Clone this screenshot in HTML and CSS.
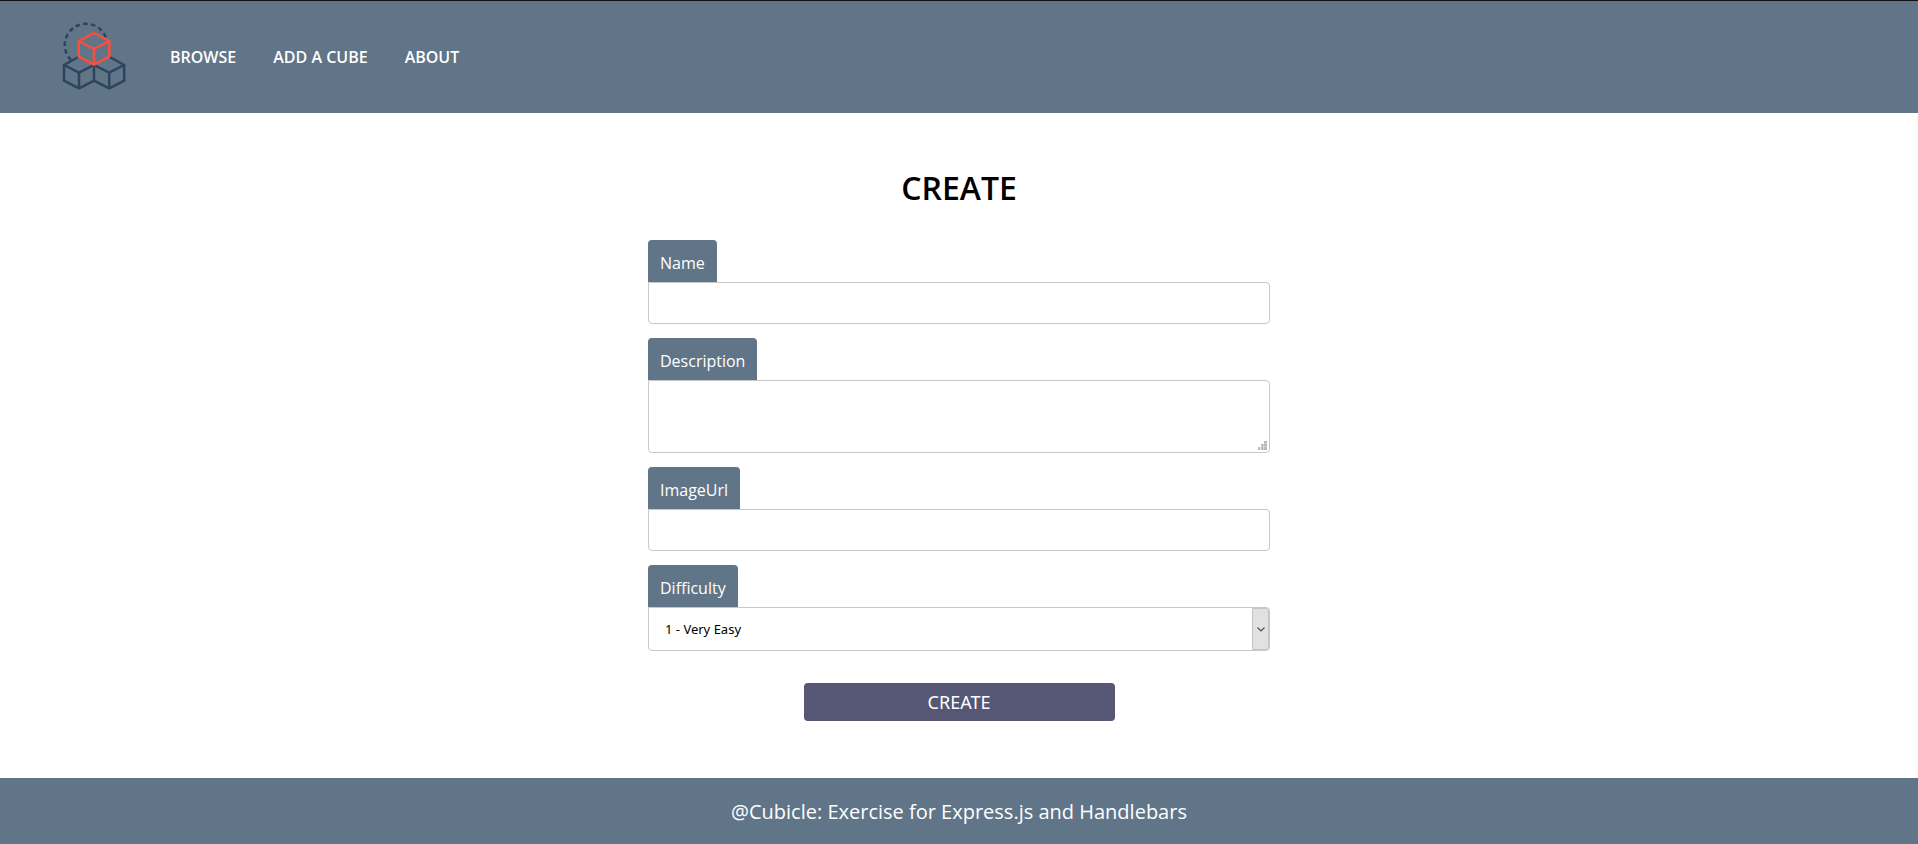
FILE: index.html
```html
<!DOCTYPE html>
<html lang="en">
<head>
<meta charset="utf-8">
<meta name="viewport" content="width=device-width, initial-scale=1">
<title>Cubicle - Create</title>
<link rel="stylesheet" href="styles.css">
</head>
<body>
<header class="site-header">
  <a class="logo" href="#" aria-label="Cubicle home">
    <svg viewBox="60 21 68 72" width="68" height="72" fill="none" stroke-width="2.5" stroke-linejoin="round" stroke-linecap="round">
      <g stroke="#2d445c">
        <path d="M71 60A21.2 21.2 0 1 1 106 38" stroke-dasharray="4.6 3.2" stroke-linecap="butt"/>
        <path d="M77.500 57.500L64 65L79 72.700L94 65V80.700L79 88.300L64 80.700V65M79 72.700V88.300"/>
        <path d="M110.500 57.500L124.200 65L109.200 72.700L94 65M94 80.700L109.200 88.300L124.200 80.700V65M109.200 72.700V88.300"/>
      </g>
      <path stroke="#f9503c" d="M94 33L109.300 41V56.700L94 64.700L78.700 56.700V41ZM78.700 41L94 49L109.300 41M94 49V64.700"/>
    </svg>
  </a>
  <nav class="main-nav">
    <a href="#">BROWSE</a>
    <a href="#">ADD A CUBE</a>
    <a href="#">ABOUT</a>
  </nav>
</header>
<main class="content">
  <form class="create-form">
    <h1>CREATE</h1>
    <div class="field">
      <label for="name">Name</label>
      <input id="name" name="name" type="text">
    </div>
    <div class="field">
      <label for="description">Description</label>
      <div class="control">
        <textarea id="description" name="description"></textarea>
        <svg class="grip" viewBox="0 0 9 9" width="9" height="9" fill="#b8b8b8" aria-hidden="true">
          <path d="M6 0h3v3H6zM3 3h3v3H3zM6 3h3v3H6zM0 6h2v3H0zM3 6h3v3H3zM6 6h3v3H6z"/>
          <path stroke="#e4e4e4" stroke-width=".6" d="M5.700 3V9M3 5.700H9M2.700 6V9M6 2.700H9"/>
        </svg>
      </div>
    </div>
    <div class="field">
      <label for="image">ImageUrl</label>
      <input id="image" name="imageUrl" type="text">
    </div>
    <div class="field">
      <label for="difficulty">Difficulty</label>
      <div class="control">
        <select id="difficulty" name="difficulty">
          <option>1 - Very Easy</option>
          <option>2 - Easy</option>
          <option>3 - Medium</option>
          <option>4 - Intermediate</option>
          <option>5 - Expert</option>
          <option>6 - Hardcore</option>
        </select>
        <span class="arrow" aria-hidden="true">
          <svg viewBox="0 0 8 5" width="8" height="5" fill="none" stroke="#505050" stroke-width="1.200"><path d="M.5 .5L4 4L7.500 .5"/></svg>
        </span>
      </div>
    </div>
    <button type="submit">CREATE</button>
  </form>
</main>
<footer class="site-footer">@Cubicle: Exercise for Express.js and Handlebars</footer>
</body>
</html>
```
FILE: styles.css
```css
* {
  box-sizing: border-box;
}

body {
  display: flex;
  flex-direction: column;
  min-height: 100vh;
  margin: 0;
  background: #fff;
  color: #000;
  font: 16px/22px "Open Sans", "Noto Sans", sans-serif;
}

.site-header {
  display: flex;
  align-items: center;
  gap: 42px;
  padding: 20px 60px;
  border-top: 1px solid #111;
  background: #607588;
}

.logo {
  display: block;
  height: 72px;
}

.logo svg {
  display: block;
}

.main-nav {
  display: flex;
  gap: 37px;
}

.main-nav a {
  color: #fff;
  font-weight: 600;
  text-decoration: none;
}

.content {
  flex: 1;
  padding: 53px 20px 51px;
}

.create-form {
  display: flex;
  flex-direction: column;
  gap: 14px;
  max-width: 622px;
  margin: 0 auto;
}

h1 {
  margin: 0 0 16px;
  font-size: 32px;
  font-weight: 600;
  line-height: 44px;
  text-align: center;
}

.field {
  display: flex;
  flex-direction: column;
  align-items: flex-start;
}

label {
  padding: 12px 12px 8px;
  border-radius: 4px 4px 0 0;
  background: #607588;
  color: #fff;
}

.control {
  position: relative;
  width: 100%;
}

input,
textarea,
select {
  display: block;
  width: 100%;
  height: 42px;
  margin: 0;
  padding: 8px 16px;
  border: 1px solid #c8c8c8;
  border-radius: 0 4px 4px 4px;
  background: #fff;
  color: #000;
  font: 13px/18px "Noto Sans", sans-serif;
}

textarea {
  height: 73px;
  resize: none;
}

select {
  height: 44px;
  appearance: none;
}

.grip {
  position: absolute;
  right: 3px;
  bottom: 3px;
}

.arrow {
  position: absolute;
  top: 1px;
  right: 1px;
  bottom: 1px;
  display: flex;
  align-items: center;
  justify-content: center;
  width: 17px;
  border: 1px solid #c4c4c4;
  border-radius: 0 3px 3px 0;
  background: #e1e1e1;
  pointer-events: none;
}

button {
  align-self: center;
  width: 50%;
  height: 38px;
  margin-top: 18px;
  border: 0;
  border-radius: 4px;
  background: #555775;
  color: #fff;
  font: 18px/24px "Noto Sans", sans-serif;
}

.site-footer {
  padding: 20px 20px 18px;
  background: #607588;
  color: #fff;
  font-size: 20px;
  line-height: 28px;
  text-align: center;
}
```
